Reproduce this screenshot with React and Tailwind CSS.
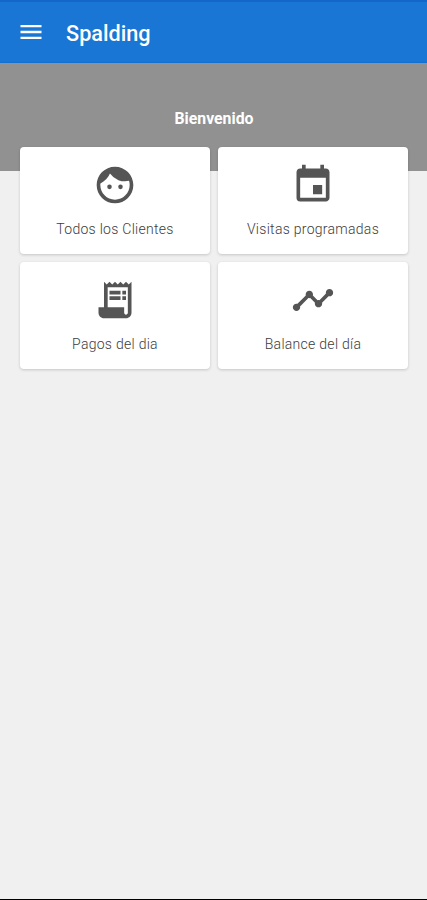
import { MdFace, MdEvent, MdReceiptLong, MdTimeline, MdMenu } from 'react-icons/md';

const menuItems = [
  { icon: MdFace, label: 'Todos los Clientes' },
  { icon: MdEvent, label: 'Visitas programadas' },
  { icon: MdReceiptLong, label: 'Pagos del dia' },
  { icon: MdTimeline, label: 'Balance del día' },
];

const Header = () => (
  <header className="flex h-[63px] shrink-0 items-center border-t-2 border-b border-t-[#1467c8] border-b-[#1470d0] bg-[#1976d4] pl-[17px] pt-px text-white">
    <button className="mb-[2px]" aria-label="Menú">
      <MdMenu size={28} />
    </button>
    <h1 className="mt-0.5 ml-[21px] text-[21.7px] leading-7 font-medium">Spalding</h1>
  </header>
);

const MenuCard = ({ icon: Icon, label }) => (
  <button className="flex h-[107px] flex-col items-center rounded-[4px] bg-white pt-4 shadow-[0_1px_3px_rgba(0,0,0,0.18)]">
    <Icon size={44} className="text-[#555555]" />
    <span className="mt-3 text-[14px] leading-5 font-light tracking-[0.28px] whitespace-nowrap text-[#3c3c3c]">{label}</span>
  </button>
);

const App = () => {
  return (
    <div className="flex h-[900px] w-[427px] flex-col overflow-hidden border-b border-black bg-[#f0f0f0] font-['Roboto',sans-serif]">
      <Header />

      {/* Welcome banner, the first row of cards overlaps it */}
      <section className="h-[108px] shrink-0 bg-[#919191] pt-[46px] pl-px text-center">
        <h2 className="text-[15.8px] leading-5 font-bold text-white">Bienvenido</h2>
      </section>

      <main className="-mt-6 grid grid-cols-2 gap-2 pr-[19px] pl-5">
        {menuItems.map((item) => (
          <MenuCard key={item.label} {...item} />
        ))}
      </main>
    </div>
  );
};

export default App;
